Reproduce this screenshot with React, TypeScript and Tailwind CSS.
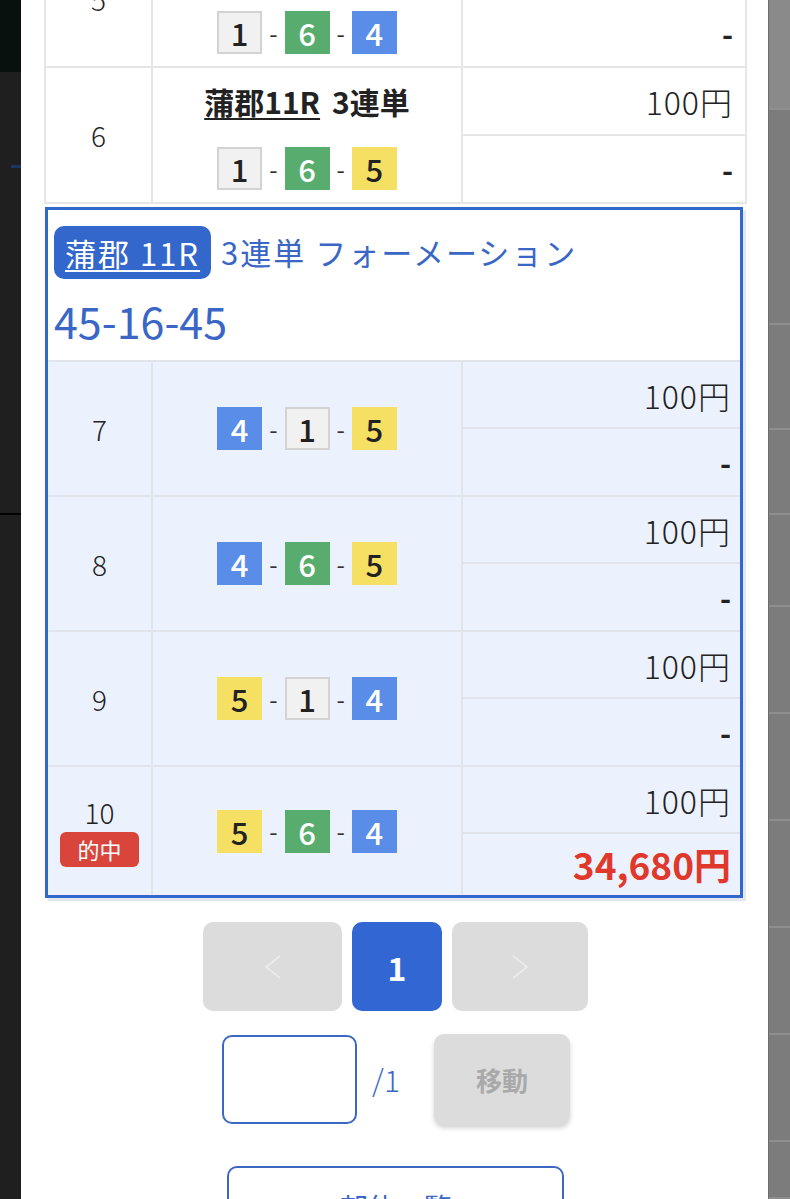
import React from "react";

type Lane = 1 | 4 | 5 | 6;

type Bet = {
  no: number;
  title?: boolean;
  combo: Lane[];
  payout?: string;
  hit?: boolean;
};

const laneStyle: Record<Lane, string> = {
  1: "bg-[#f1f1f1] text-[#222] border-2 border-[#d3d3d3]",
  4: "bg-[#5a8de8] text-white",
  5: "bg-[#f6e063] text-[#222]",
  6: "bg-[#58ac6d] text-white",
};

const topBets: Bet[] = [
  { no: 5, title: true, combo: [1, 6, 4] },
  { no: 6, title: true, combo: [1, 6, 5] },
];

const groupBets: Bet[] = [
  { no: 7, combo: [4, 1, 5] },
  { no: 8, combo: [4, 6, 5] },
  { no: 9, combo: [5, 1, 4] },
  { no: 10, combo: [5, 6, 4], payout: "34,680円", hit: true },
];

function Combo({ lanes }: { lanes: Lane[] }) {
  return (
    <div className="flex items-center gap-[7px]">
      {lanes.map((lane, i) => (
        <React.Fragment key={i}>
          {i > 0 ? (
            <span className="text-[24px] leading-none text-[#333]">-</span>
          ) : null}
          <span
            className={`flex h-[43px] w-[45px] items-center justify-center text-[31px] font-medium leading-none ${laneStyle[lane]}`}
          >
            {lane}
          </span>
        </React.Fragment>
      ))}
    </div>
  );
}

function BetRow({
  bet,
  inGroup,
  last,
}: {
  bet: Bet;
  inGroup?: boolean;
  last?: boolean;
}) {
  const line = inGroup ? "border-[#e1e4ea]" : "border-[#e6e6e6]";
  const bottom = last ? "" : "border-b-2";
  return (
    <div
      className={
        inGroup
          ? "grid grid-cols-[105px_310px_1fr] bg-[#ecf2fd]"
          : "grid grid-cols-[107px_310px_1fr] bg-white"
      }
    >
      <div
        className={`row-span-2 flex flex-col items-center justify-center border-r-2 ${bottom} ${line}`}
      >
        <span className="text-[28px] font-light leading-[32px]">{bet.no}</span>
        {bet.hit ? (
          <span className="mt-[4px] flex h-[35px] w-[79px] items-center justify-center rounded-[6px] bg-[#d9443b] text-[22px] leading-none text-white">
            的中
          </span>
        ) : null}
      </div>
      <div
        className={`row-span-2 flex flex-col items-center justify-center border-r-2 ${bottom} ${line}`}
      >
        {bet.title ? (
          <>
            <div className="flex h-[67px] items-center text-[30px] font-semibold">
              <span className="underline decoration-[1.5px] underline-offset-[4px]">
                蒲郡11R
              </span>
              <span className="ml-[12px]">3連単</span>
            </div>
            <div className="flex h-[67px] items-center">
              <Combo lanes={bet.combo} />
            </div>
          </>
        ) : (
          <Combo lanes={bet.combo} />
        )}
      </div>
      <div
        className={`flex items-center justify-end border-b-2 ${line} ${
          inGroup ? "h-[67px] pr-[9px]" : "h-[68px] border-r-2 pr-[12px]"
        } text-[32px] font-light tracking-[1px]`}
      >
        100円
      </div>
      <div
        className={`flex items-center justify-end ${line} ${
          inGroup
            ? last
              ? "h-[61px] pr-[9px]"
              : "h-[68px] border-b-2 pr-[9px]"
            : "h-[68px] border-r-2 border-b-2 pr-[12px]"
        }`}
      >
        {bet.payout ? (
          <span className="text-[37px] font-bold text-[#e0392b]">
            {bet.payout}
          </span>
        ) : (
          <span className="text-[30px] font-bold">-</span>
        )}
      </div>
    </div>
  );
}

function LeftStrip() {
  return (
    <div className="flex w-[21px] shrink-0 flex-col bg-[#1f1f1f]">
      <div className="h-[72px] bg-[#08110d]" />
      <div className="ml-[11px] mt-[93px] h-[3px] w-[10px] bg-[#1c3560]" />
      <div className="mt-[345px] h-[2px] bg-black" />
    </div>
  );
}

const stripHeights = [110, 215, 105, 85, 92, 107, 107, 107, 107, 107, 57];

function RightStrip() {
  return (
    <div className="flex w-[22px] shrink-0 flex-col border-l border-[#6c6c6c] bg-[#7c7c7c]">
      {stripHeights.map((h, i) => (
        <div
          key={i}
          className={
            i === 0
              ? "h-[110px] border-b-2 border-[#8f8f8f] bg-[#8a8a8a]"
              : "border-b-2 border-[#8e8e8e]"
          }
          style={i === 0 ? undefined : { height: h }}
        />
      ))}
    </div>
  );
}

function Chevron({ dir }: { dir: "left" | "right" }) {
  return (
    <svg width="20" height="24" viewBox="0 0 20 24" fill="none">
      <polyline
        points={dir === "left" ? "17,1 3,12 17,23" : "3,1 17,12 3,23"}
        stroke="#ececec"
        strokeWidth="1.6"
      />
    </svg>
  );
}

export default function App() {
  return (
    <div className="flex h-[1199px] w-[790px] overflow-hidden font-['Noto_Sans_CJK_JP','Noto_Sans',sans-serif] text-[#222]">
      <LeftStrip />
      <main className="w-[747px] shrink-0 bg-white">
        <div className="ml-[23px] mt-[-68px] w-[703px]">
          <div className="border-l-2 border-[#e6e6e6]">
            {topBets.map((b) => (
              <BetRow key={b.no} bet={b} />
            ))}
          </div>
          <div className="pl-[1px] pt-[3px]">
            <div className="w-[698px] border-[3px] border-[#3467cc] shadow-[3px_3px_0_#e3e7ef]">
              <div className="h-[152px] border-b-2 border-[#e1e4ea] bg-white pl-[6px] pt-[16px]">
                <div className="flex items-center">
                  <span className="flex h-[53px] items-center rounded-[10px] bg-[#3467cc] px-[11px] text-[31px] leading-none tracking-[2px] text-white underline decoration-[1.5px] underline-offset-[4px]">
                    蒲郡 11R
                  </span>
                  <span className="ml-[10px] text-[31px] tracking-[2px] text-[#3a67c6]">
                    3連単 フォーメーション
                  </span>
                </div>
                <div className="mt-[16px] text-[43px] leading-[50px] text-[#3a67c6]">
                  45-16-45
                </div>
              </div>
              {groupBets.map((b, i) => (
                <BetRow
                  key={b.no}
                  bet={b}
                  inGroup
                  last={i === groupBets.length - 1}
                />
              ))}
            </div>
          </div>
        </div>

        <div className="mt-[24px] flex justify-center gap-[10px] pl-[2px]">
          <button className="flex h-[89px] w-[139px] items-center justify-center rounded-[10px] bg-[#dcdcdc]">
            <Chevron dir="left" />
          </button>
          <button className="flex h-[89px] w-[90px] items-center justify-center rounded-[10px] bg-[#3266d2] text-[32px] font-bold text-white">
            1
          </button>
          <button className="flex h-[89px] w-[136px] items-center justify-center rounded-[10px] bg-[#dcdcdc]">
            <Chevron dir="right" />
          </button>
        </div>

        <div className="mt-[23px] flex items-center justify-center pl-[3px]">
          <div className="h-[89px] w-[135px] rounded-[10px] border-2 border-[#3c67c3] bg-white" />
          <span className="ml-[15px] text-[30px] font-light text-[#3a67c6]">
            /1
          </span>
          <button className="ml-[34px] flex h-[91px] w-[136px] items-center justify-center rounded-[10px] bg-[#dcdcdc] text-[26px] font-bold text-[#a9a9a9] shadow-[0_3px_5px_rgba(0,0,0,0.18)]">
            移動
          </button>
        </div>

        <div className="mt-[41px] flex justify-center pl-[2px]">
          <button className="flex h-[90px] w-[337px] items-start justify-center rounded-[10px] border-2 border-[#3c67c3] pt-[18px] text-[28px] text-[#3a67c6]">
            部位一覧
          </button>
        </div>
      </main>
      <RightStrip />
    </div>
  );
}
